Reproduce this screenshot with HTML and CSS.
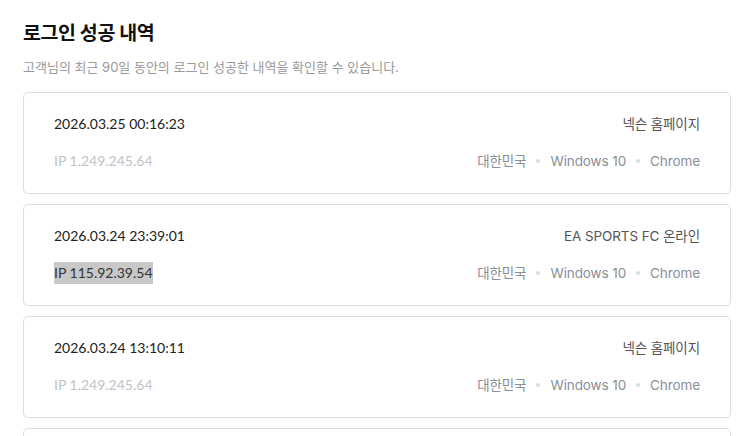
FILE: index.html
```html
<!DOCTYPE html>
<html lang="ko">
<head>
<meta charset="utf-8">
<link rel="stylesheet" href="styles.css">
</head>
<body>
<div class="page">
  <h1 class="title">로그인 성공 내역</h1>
  <p class="desc">고객님의 최근 90일 동안의 로그인 성공한 내역을 확인할 수 있습니다.</p>
  <ul class="list">
    <li class="card">
      <div class="row">
        <span class="date">2026.03.25 00:16:23</span>
        <span class="service">넥슨 홈페이지</span>
      </div>
      <div class="row">
        <span class="ip">IP 1.249.245.64</span>
        <span class="meta"><span>대한민국</span><i class="dot"></i><span>Windows 10</span><i class="dot"></i><span>Chrome</span></span>
      </div>
    </li>
    <li class="card">
      <div class="row">
        <span class="date">2026.03.24 23:39:01</span>
        <span class="service">EA SPORTS FC 온라인</span>
      </div>
      <div class="row">
        <span class="ip ip-selected">IP 115.92.39.54</span>
        <span class="meta"><span>대한민국</span><i class="dot"></i><span>Windows 10</span><i class="dot"></i><span>Chrome</span></span>
      </div>
    </li>
    <li class="card">
      <div class="row">
        <span class="date">2026.03.24 13:10:11</span>
        <span class="service">넥슨 홈페이지</span>
      </div>
      <div class="row">
        <span class="ip">IP 1.249.245.64</span>
        <span class="meta"><span>대한민국</span><i class="dot"></i><span>Windows 10</span><i class="dot"></i><span>Chrome</span></span>
      </div>
    </li>
    <li class="card"></li>
  </ul>
</div>
</body>
</html>
```

FILE: styles.css
```css
* { box-sizing: border-box; }
html, body { margin: 0; padding: 0; background: #fff; }
body {
  font-family: Inter, "Noto Sans CJK KR", sans-serif;
  color: #222;
  overflow: hidden;
}
.page {
  width: 731px;
  padding: 21px 0 0 23px;
}
.title {
  margin: 0;
  font-family: Inter, "Noto Sans CJK KR", sans-serif;
  font-size: 19.5px;
  line-height: 24px;
  font-weight: 700;
  color: #111;
  letter-spacing: -0.4px;
}
.desc {
  margin: 12px 0 0;
  font-size: 13px;
  line-height: 20px;
  color: #999;
  letter-spacing: 0;
}
.list {
  list-style: none;
  margin: 15px 0 0;
  padding: 0;
  display: flex;
  flex-direction: column;
  gap: 10px;
}
.card {
  height: 102px;
  border: 1px solid #dcdde2;
  border-radius: 5px;
  padding: 21px 30px 22px;
  display: flex;
  flex-direction: column;
  gap: 17px;
}
.row {
  display: flex;
  justify-content: space-between;
  align-items: center;
  height: 20px;
}
.date {
  font-family: Lato, "Noto Sans CJK KR", sans-serif;
  font-size: 14px;
  line-height: 20px;
  color: #222;
}
.ip {
  font-family: Lato, "Noto Sans CJK KR", sans-serif;
  font-size: 14px;
  line-height: 22px;
  color: #c0c3c8;
}
.ip-selected {
  background: #c8c8c8;
  color: #333;
}
.service {
  font-size: 13.5px;
  line-height: 20px;
  color: #555;
  letter-spacing: -0.1px;
}
.meta {
  display: flex;
  align-items: center;
  gap: 10px;
  font-size: 13.5px;
  line-height: 20px;
  color: #8a8f99;
  letter-spacing: -0.1px;
}
.dot {
  width: 4px;
  height: 4px;
  border-radius: 50%;
  background: #dadce0;
}
```
